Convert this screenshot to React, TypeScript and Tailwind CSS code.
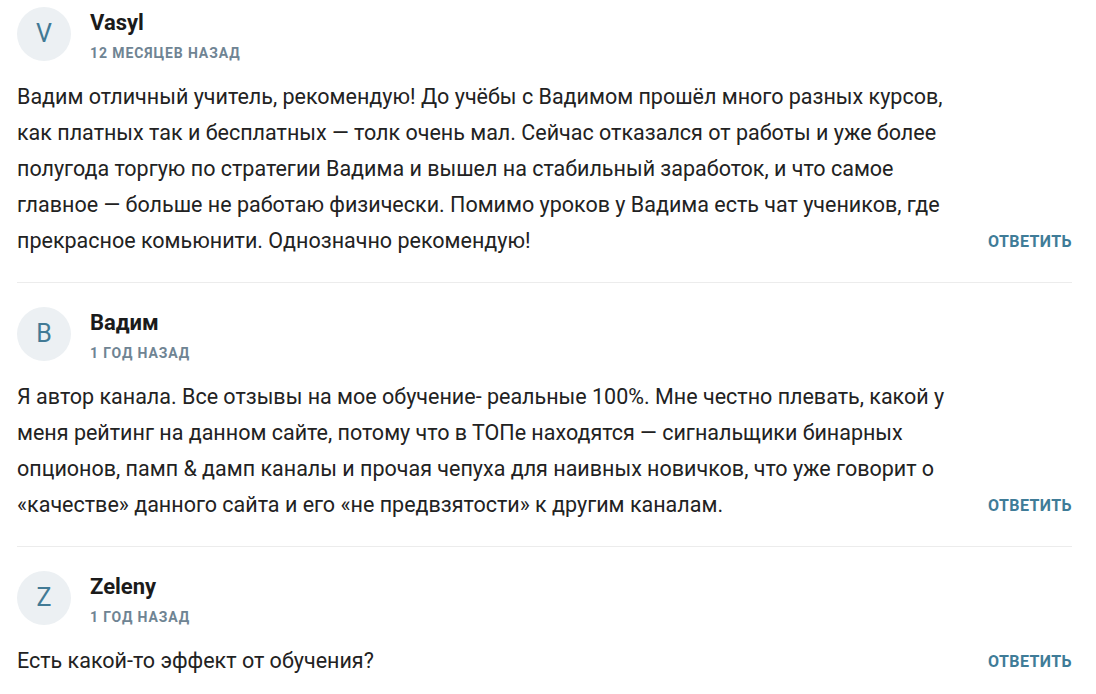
import React from 'react'

interface Comment {
  id: number
  author: string
  date: string
  text: string
}

const comments: Comment[] = [
  {
    id: 1,
    author: 'Vasyl',
    date: '12 месяцев назад',
    text:
      'Вадим отличный учитель, рекомендую! До учёбы с Вадимом прошёл много разных курсов, как платных так и бесплатных — толк очень мал. Сейчас отказался от работы и уже более полугода торгую по стратегии Вадима и вышел на стабильный заработок, и что самое главное — больше не работаю физически. Помимо уроков у Вадима есть чат учеников, где прекрасное комьюнити. Однозначно рекомендую!',
  },
  {
    id: 2,
    author: 'Вадим',
    date: '1 год назад',
    text:
      'Я автор канала. Все отзывы на мое обучение- реальные 100%. Мне честно плевать, какой у меня рейтинг на данном сайте, потому что в ТОПе находятся — сигнальщики бинарных опционов, памп & дамп каналы и прочая чепуха для наивных новичков, что уже говорит о «качестве» данного сайта и его «не предвзятости» к другим каналам.',
  },
  {
    id: 3,
    author: 'Zeleny',
    date: '1 год назад',
    text: 'Есть какой-то эффект от обучения?',
  },
]

function CommentItem({ comment, first }: { comment: Comment; first: boolean }) {
  return (
    <div className={`${first ? 'pt-[7px]' : 'pt-6 border-t border-[#ececec]'} pb-[23px]`}>
      <div className="flex items-start gap-[19px]">
        <div className="w-[54px] h-[54px] rounded-full bg-[#ecf0f3] flex items-center justify-center text-[25px] text-[#427a95] shrink-0">
          {comment.author[0].toUpperCase()}
        </div>
        <div className="pt-[3px]">
          <div className="text-[22px] leading-[26px] font-bold text-[#1b1b1b]">{comment.author}</div>
          <div className="mt-[9px] text-[14px] leading-4 font-bold uppercase tracking-[0.9px] text-[#6f8493]">
            {comment.date}
          </div>
        </div>
      </div>
      <div className="mt-[18px] flex items-end justify-between">
        <p className="text-[21.5px] leading-9 text-[#222222] max-w-[960px]">{comment.text}</p>
        <button className="shrink-0 mb-[5px] text-[16px] leading-6 font-bold uppercase tracking-[0.4px] text-[#3f7c98]">
          Ответить
        </button>
      </div>
    </div>
  )
}

export default function App() {
  return (
    <div className="min-h-screen bg-white font-['Roboto',sans-serif]">
      <div className="mx-[17px] w-[1055px]">
        {comments.map((c, i) => (
          <CommentItem key={c.id} comment={c} first={i === 0} />
        ))}
      </div>
    </div>
  )
}
